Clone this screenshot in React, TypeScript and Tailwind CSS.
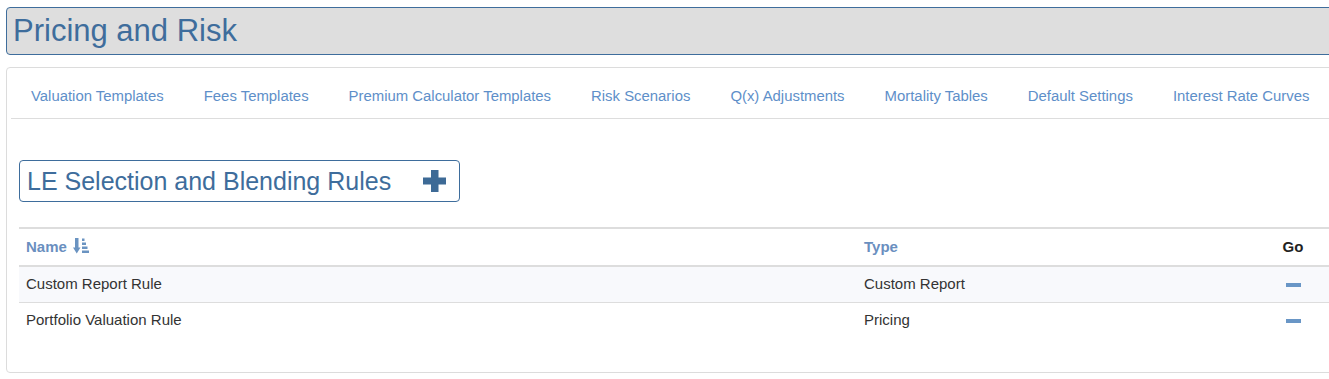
import React from "react";

const tabs = [
  "Valuation Templates",
  "Fees Templates",
  "Premium Calculator Templates",
  "Risk Scenarios",
  "Q(x) Adjustments",
  "Mortality Tables",
  "Default Settings",
  "Interest Rate Curves",
];

const rows = [
  { name: "Custom Report Rule", type: "Custom Report" },
  { name: "Portfolio Valuation Rule", type: "Pricing" },
];

function SortIcon() {
  return (
    <svg width="16" height="16" viewBox="0 0 16 16" className="inline-block ml-[6px] align-[-2px]">
      <rect x="2" y="0" width="3.5" height="10" fill="#6a93c1" />
      <polygon points="0,9.5 7.5,9.5 3.75,15.5" fill="#6a93c1" />
      <rect x="9" y="0.5" width="2.5" height="2.5" fill="#6a93c1" />
      <rect x="9" y="4.5" width="4" height="2.5" fill="#6a93c1" />
      <rect x="9" y="8.5" width="5.5" height="2.5" fill="#6a93c1" />
      <rect x="9" y="12.5" width="7" height="2.5" fill="#6a93c1" />
    </svg>
  );
}

function PlusIcon() {
  return (
    <svg width="23" height="22" viewBox="0 0 23 22">
      <rect x="8" y="0" width="7.5" height="22" fill="#3d6a96" />
      <rect x="0" y="7.5" width="23" height="7" fill="#3d6a96" />
    </svg>
  );
}

export default function App() {
  return (
    <div
      className="w-full overflow-hidden bg-white"
      style={{ fontFamily: '"Liberation Sans", Arial, sans-serif' }}
    >
      <div className="w-[1360px] pl-[6px] pt-[7px]">
        <div className="w-[1340px] h-[48px] bg-[#dedede] border border-[#3e6d9c] rounded-[4px] pl-[6px] flex items-center">
          <h1 className="text-[31px] leading-[46px] text-[#3e6d9c] font-normal">Pricing and Risk</h1>
        </div>

        <div className="mt-[12px] w-[1340px] border border-[#dcdcdc] rounded-[4px] p-[4px]">
          <ul className="flex border-b border-[#dddddd]">
            {tabs.map((t) => (
              <li key={t} className="px-[20px] pt-[13px] pb-[11px] text-[14.9px] leading-[22px] text-[#5e8fc9] whitespace-nowrap">
                {t}
              </li>
            ))}
          </ul>

          <div className="px-[8px] pt-[41px] pb-[30px]">
            <div className="inline-flex items-center h-[42px] border border-[#3e6d9c] rounded-[4px] pl-[7px] pr-[13px]">
              <span className="text-[25px] leading-[40px] text-[#3e6d9c]">LE Selection and Blending Rules</span>
              <span className="ml-[32px] flex items-center">
                <PlusIcon />
              </span>
            </div>

            <table className="mt-[25px] w-[1314px] border-collapse text-[15px] text-[#333333]">
              <thead>
                <tr className="border-t-2 border-b-2 border-[#dddddd]">
                  <th className="w-[838px] text-left font-bold px-[7px] py-[8px] leading-[20px] text-[#6a8fbf]">
                    Name
                    <SortIcon />
                  </th>
                  <th className="w-[419px] text-left font-bold px-[7px] py-[8px] leading-[20px] text-[#6a8fbf]">Type</th>
                  <th className="w-[34px] text-center font-bold py-[8px] leading-[20px] text-[#222222]">Go</th>
                  <th></th>
                </tr>
              </thead>
              <tbody>
                {rows.map((r, i) => (
                  <tr
                    key={r.name}
                    className={i === 0 ? "bg-[#f8f9fc]" : "border-t border-[#dddddd]"}
                  >
                    <td className="px-[7px] pt-[7px] pb-[9px] leading-[19px]">{r.name}</td>
                    <td className="px-[7px] pt-[7px] pb-[9px] leading-[19px]">{r.type}</td>
                    <td className="pt-[7px] pb-[9px] leading-[19px]">
                      <div className="flex justify-center pt-[3px]">
                        <span className="block w-[15px] h-[4px] bg-[#6996c6]" />
                      </div>
                    </td>
                    <td></td>
                  </tr>
                ))}
              </tbody>
            </table>
          </div>
        </div>
      </div>
    </div>
  );
}
